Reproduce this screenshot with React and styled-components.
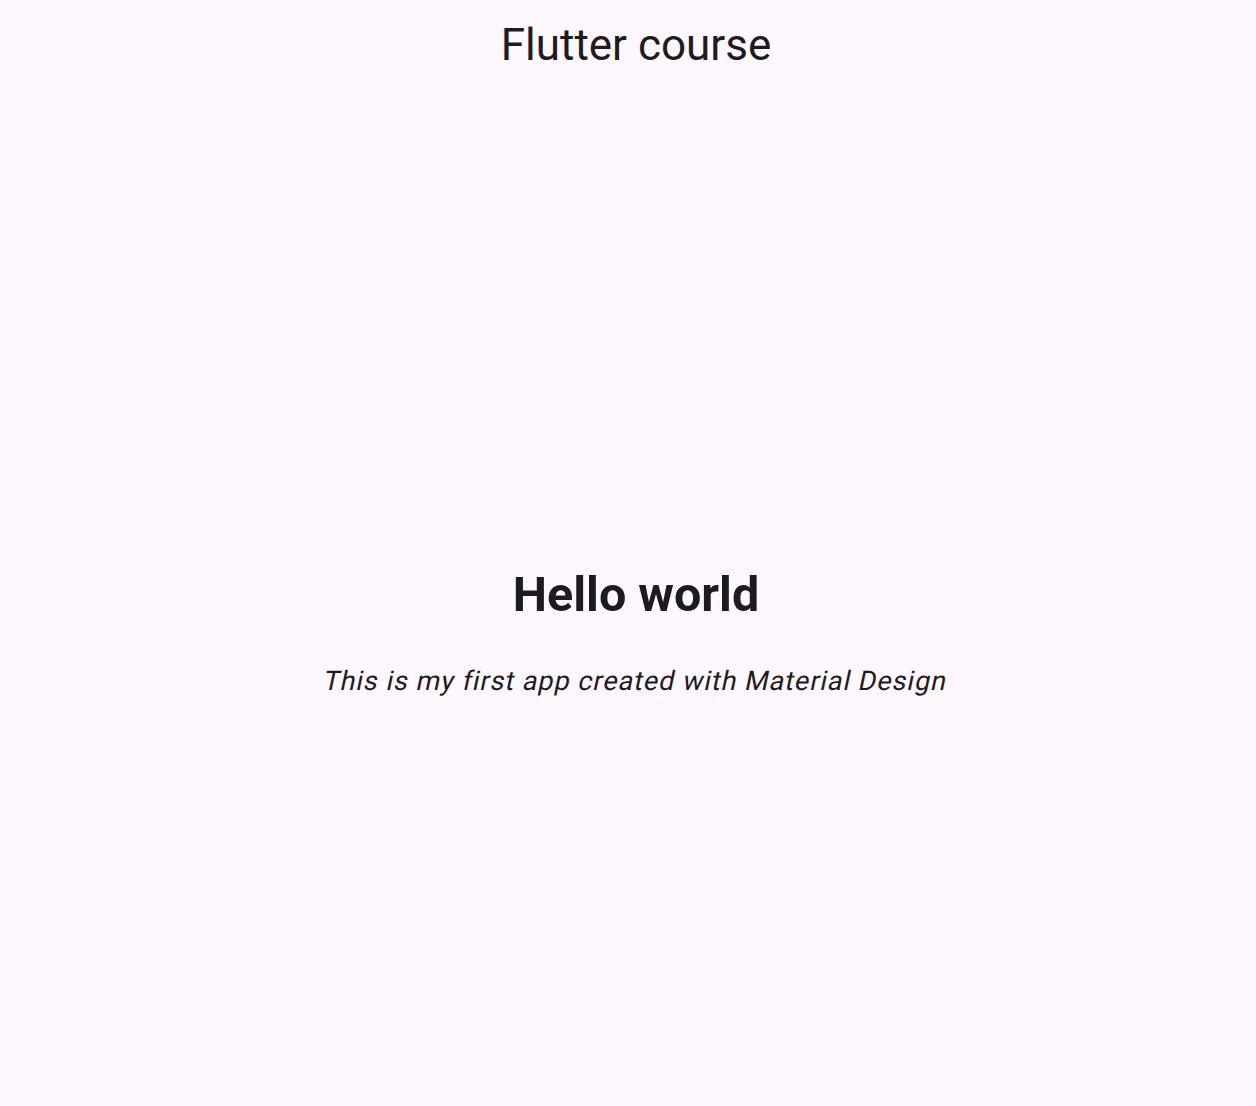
import React from 'react';
import styled, {createGlobalStyle} from 'styled-components';

const GlobalStyle = createGlobalStyle`
    html, body {
        margin: 0;
        padding: 0;
        background: #fef7ff;
    }
    body {
        font-family: Roboto, "Liberation Sans", sans-serif;
        color: #1d1b20;
    }
`;

const Screen = styled.div`
    display: flex;
    flex-direction: column;
    height: 1106px;
    padding-left: 16px;
    box-sizing: border-box;
    background: #fef7ff;
`;

const AppBar = styled.header`
    display: flex;
    justify-content: center;
    align-items: center;
    height: 90px;
    flex-shrink: 0;
`;

const Title = styled.h1`
    margin: 0;
    font-size: 44px;
    font-weight: 400;
    line-height: 1;
`;

const Body = styled.main`
    flex: 1;
    display: flex;
    flex-direction: column;
    align-items: center;
    justify-content: center;
    gap: 40px;
    padding-top: 69px;
`;

const Headline = styled.h2`
    margin: 0;
    font-size: 48.5px;
    font-weight: 700;
    line-height: 1.2;
`;

// flutter fakes the italic by slanting the upright face
const Subtitle = styled.p`
    margin: 0;
    font-size: 27px;
    font-weight: 400;
    letter-spacing: 0.95px;
    line-height: 1.3;
    transform: skewX(-12deg);
`;

export default function App() {
    return (
        <>
            <GlobalStyle/>
            <Screen>
                <AppBar>
                    <Title>Flutter course</Title>
                </AppBar>
                <Body>
                    <Headline>Hello world</Headline>
                    <Subtitle>This is my first app created with Material Design</Subtitle>
                </Body>
            </Screen>
        </>
    );
}
